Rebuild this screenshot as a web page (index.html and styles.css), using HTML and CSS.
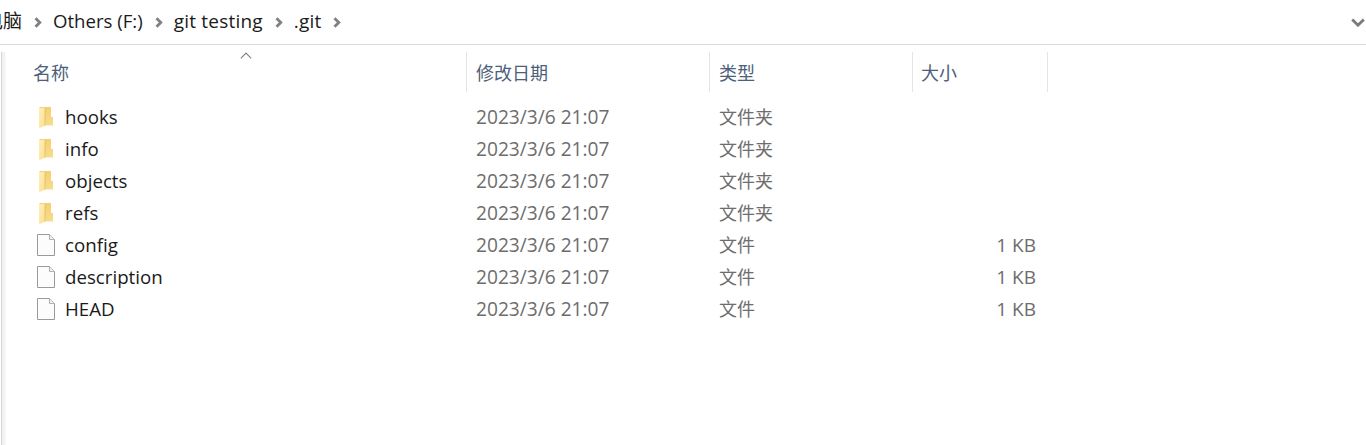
FILE: index.html
```html
<!DOCTYPE html>
<html lang="zh-CN">
<head>
<meta charset="utf-8">
<title>.git</title>
<link rel="stylesheet" href="styles.css">
</head>
<body>
<header class="addressbar">
  <nav class="crumbs">
    <span class="crumb crumb-first">电脑</span>
    <svg class="sep" viewBox="0 0 8 11"><path d="M1.500 1.200 5.800 5.500 1.500 9.800"/></svg>
    <span class="crumb crumb-tight">Others (F:)</span>
    <svg class="sep" viewBox="0 0 8 11"><path d="M1.500 1.200 5.800 5.500 1.500 9.800"/></svg>
    <span class="crumb crumb-wide">git testing</span>
    <svg class="sep" viewBox="0 0 8 11"><path d="M1.500 1.200 5.800 5.500 1.500 9.800"/></svg>
    <span class="crumb crumb-wide">.git</span>
    <svg class="sep" viewBox="0 0 8 11"><path d="M1.500 1.200 5.800 5.500 1.500 9.800"/></svg>
  </nav>
  <svg class="dropdown" viewBox="0 0 14 9"><path d="M1.200 1.500 7 7.200l5.800-5.700"/></svg>
</header>
<main class="pane">
  <div class="edge"></div>
  <section class="list">
    <div class="head">
      <div class="col col-name">名称<svg class="sort" viewBox="0 0 12 7"><path d="M.8 6.300 6 1l5.200 5.300"/></svg></div>
      <div class="col col-date">修改日期</div>
      <div class="col col-type">类型</div>
      <div class="col col-size">大小</div>
    </div>
    <div class="rows">
      <div class="row"><span class="name"><svg class="ico" viewBox="0 0 20 24"><use href="#folder"/></svg>hooks</span><span class="date">2023/3/6 21:07</span><span class="type">文件夹</span><span class="size"></span></div>
      <div class="row"><span class="name"><svg class="ico" viewBox="0 0 20 24"><use href="#folder"/></svg>info</span><span class="date">2023/3/6 21:07</span><span class="type">文件夹</span><span class="size"></span></div>
      <div class="row"><span class="name"><svg class="ico" viewBox="0 0 20 24"><use href="#folder"/></svg>objects</span><span class="date">2023/3/6 21:07</span><span class="type">文件夹</span><span class="size"></span></div>
      <div class="row"><span class="name"><svg class="ico" viewBox="0 0 20 24"><use href="#folder"/></svg>refs</span><span class="date">2023/3/6 21:07</span><span class="type">文件夹</span><span class="size"></span></div>
      <div class="row"><span class="name"><svg class="ico" viewBox="0 0 20 24"><use href="#file"/></svg>config</span><span class="date">2023/3/6 21:07</span><span class="type">文件</span><span class="size">1 KB</span></div>
      <div class="row"><span class="name"><svg class="ico" viewBox="0 0 20 24"><use href="#file"/></svg>description</span><span class="date">2023/3/6 21:07</span><span class="type">文件</span><span class="size">1 KB</span></div>
      <div class="row"><span class="name"><svg class="ico" viewBox="0 0 20 24"><use href="#file"/></svg>HEAD</span><span class="date">2023/3/6 21:07</span><span class="type">文件</span><span class="size">1 KB</span></div>
    </div>
  </section>
</main>
<svg class="defs" width="0" height="0">
  <defs>
    <linearGradient id="fg" x1="0" y1="0" x2="0" y2="1"><stop offset="0" stop-color="#f3cf72"/><stop offset="1" stop-color="#f9dd8c"/></linearGradient>
    <linearGradient id="ff" x1="0" y1="0" x2="1" y2="1"><stop offset="0" stop-color="#fff0bb"/><stop offset="1" stop-color="#fbdf8e"/></linearGradient>
    <symbol id="folder" viewBox="0 0 20 24">
      <path d="M4.500 2H16V12H18V20.500H9L4.500 22Z" fill="url(#fg)"/>
      <path d="M4 3.500 10 2.200V20.500L5 23 4 22Z" fill="url(#ff)"/>
      <path d="M10 2.200V20.500" stroke="#e6bd5c" stroke-width=".8"/>
    </symbol>
    <symbol id="file" viewBox="0 0 20 24">
      <path d="M2.500 1.500H14.500L19.500 6.500V22.500H2.500Z" fill="#fcfcfc" stroke="#9a9a9a"/>
      <path d="M14.500 1.500V6.500H19.500" fill="#efefef" stroke="#b0b0b0"/>
    </symbol>
  </defs>
</svg>
</body>
</html>
```
FILE: styles.css
```css
* { box-sizing: border-box; }
html, body { margin: 0; height: 100%; overflow: hidden; background: #fff; }
body { font-family: "Open Sans", "Noto Sans CJK SC", sans-serif; font-size: 19px; color: #1a1a1a; }

.addressbar { height: 45px; border-bottom: 1px solid #d9d9d9; display: flex; align-items: center; justify-content: space-between; padding-right: 1px; }
.crumbs { display: flex; align-items: center; margin-left: -16px; padding-bottom: 2px; }
.crumb { line-height: 26px; white-space: nowrap; }
.crumb-tight { font-size: 18.600px; }
.crumb-wide { letter-spacing: .2px; }
.sep { width: 8px; height: 11px; margin: 2px 11px 0 12px; fill: none; stroke: #808080; stroke-width: 2.800; }
.dropdown { width: 14px; height: 9px; margin-top: 1px; fill: none; stroke: #7a7a7a; stroke-width: 2.800; }

.pane { display: flex; height: 400px; }
.edge { width: 6px; margin-top: 7px; background: linear-gradient(to right, #fff 0 1px, #d4d4d4 1px 2px, #f2f2f2 2px 5px, #fafafa 5px 6px); }
.list { flex: 1; }

.head { display: grid; grid-template-columns: 461px 243px 203px 135px; grid-auto-rows: 40px; margin-top: 7px; height: 40px; color: #4c607a; }
.col { border-right: 1px solid #e5e5e5; padding-left: 9px; line-height: 42px; white-space: nowrap; font-size: 18px; }
.col-name { padding-left: 27px; position: relative; }
.col-size { padding-left: 8px; }
.sort { position: absolute; left: 234px; top: 0; width: 12px; height: 7px; fill: none; stroke: #808080; stroke-width: 1.100; }

.rows { padding-top: 9px; }
.row { display: grid; grid-template-columns: 461px 243px 203px 135px; height: 32px; align-items: center; line-height: 32px; color: #6d6d6d; white-space: nowrap; }
.name { display: flex; align-items: center; padding-left: 29px; color: #1a1a1a; font-size: 18.700px; }
.ico { width: 20px; height: 24px; margin-right: 10px; flex: none; }
.date, .type { padding-left: 9px; }
.date { font-size: 19.150px; }
.type { font-size: 18px; }
.size { text-align: right; padding-right: 12px; }
.defs { position: absolute; }
```
